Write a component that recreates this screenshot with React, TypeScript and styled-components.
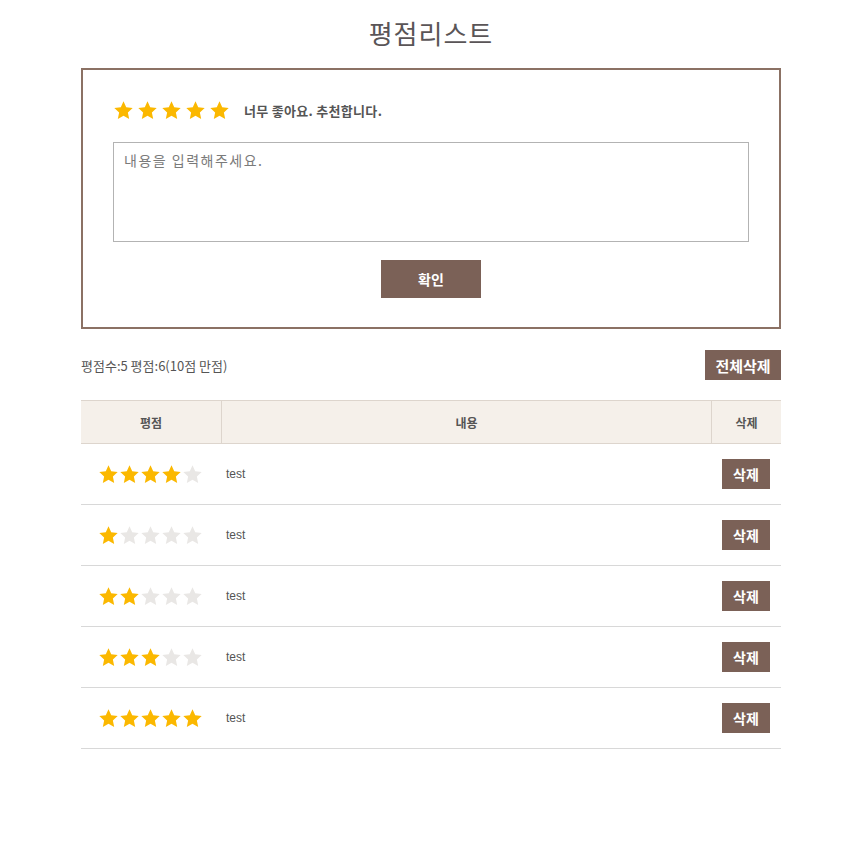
import React from "react";
import styled, { createGlobalStyle } from "styled-components";

const Global = createGlobalStyle`
  html, body { margin: 0; padding: 0; background: #fff; }
  body { font-family: "Liberation Sans", "Noto Sans CJK KR", sans-serif; color: #555; }
  * { box-sizing: border-box; }
`;

const Page = styled.div`
  width: 700px;
  margin: 0 auto;
  padding-top: 15px;
`;

const Title = styled.h1`
  margin: 0 0 17px;
  height: 36px;
  line-height: 36px;
  text-align: center;
  font-family: "Noto Sans CJK KR", sans-serif;
  font-weight: 400;
  font-size: 26px;
  letter-spacing: 1px;
  color: #5a5557;
`;

const FormBox = styled.div`
  border: 2px solid #8b7164;
  padding: 30px 30px 29px;
  display: flex;
  flex-direction: column;
`;

const RatingRow = styled.div`
  display: flex;
  align-items: center;
  height: 20px;
`;

const Stars = styled.div<{ $gap: number }>`
  display: flex;
  gap: ${(p) => p.$gap}px;
`;

const RatingLabel = styled.span`
  margin-left: 14px;
  font-size: 13px;
  font-weight: 700;
  letter-spacing: 0.3px;
  color: #555;
  font-family: "Noto Sans CJK KR", sans-serif;
`;

const TextArea = styled.textarea`
  display: block;
  margin-top: 22px;
  width: 100%;
  height: 100px;
  border: 1px solid #b3b3b3;
  padding: 7px 10px;
  resize: none;
  font-family: "Noto Sans CJK KR", sans-serif;
  font-size: 14px;
  letter-spacing: 1.5px;
  color: #555;
  outline: none;
  &::placeholder { color: #7a7a7a; }
`;

const ConfirmButton = styled.button`
  align-self: center;
  margin-top: 18px;
  width: 100px;
  height: 38px;
  border: none;
  background: #7b6157;
  color: #fff;
  font-family: "Noto Sans CJK KR", sans-serif;
  font-weight: 700;
  font-size: 14px;
`;

const SummaryBar = styled.div`
  margin-top: 21px;
  height: 30px;
  display: flex;
  align-items: center;
  justify-content: space-between;
`;

const SummaryText = styled.span`
  font-size: 13px;
  color: #555;
  font-family: "Noto Sans CJK KR", sans-serif;
`;

const BrownButton = styled.button<{ $w: number; $h: number; $fs: number }>`
  width: ${(p) => p.$w}px;
  height: ${(p) => p.$h}px;
  border: none;
  padding: 0;
  background: #7b6157;
  color: #fff;
  font-family: "Noto Sans CJK KR", sans-serif;
  font-weight: 700;
  font-size: ${(p) => p.$fs}px;
`;

const Table = styled.div`
  margin-top: 20px;
  display: grid;
  grid-template-columns: 140px 1fr 70px;
`;

const HeadCell = styled.div<{ $divider?: boolean }>`
  height: 44px;
  background: #f5f0ea;
  border-top: 1px solid #ddd5cd;
  border-bottom: 1px solid #ddd5cd;
  border-left: ${(p) => (p.$divider ? "1px solid #ddd5cd" : "none")};
  display: flex;
  align-items: center;
  justify-content: center;
  font-size: 12px;
  font-weight: 700;
  color: #555;
  font-family: "Noto Sans CJK KR", sans-serif;
`;

const Cell = styled.div<{ $align: "center" | "flex-start" }>`
  height: 61px;
  border-bottom: 1px solid #d8d8d8;
  display: flex;
  align-items: center;
  justify-content: ${(p) => p.$align};
  padding-left: ${(p) => (p.$align === "flex-start" ? "5px" : "0")};
  font-size: 12px;
  color: #555;
`;

const StarCell = styled(Cell)`
  padding-right: 2px;
`;

const Star = ({ on, size }: { on: boolean; size: number }) => (
  <svg width={size} height={size} viewBox="0 0 24 24">
    <polygon
      points="12,1.5 15.1,8.2 22.5,9.1 17,14.2 18.5,21.6 12,17.9 5.5,21.6 7,14.2 1.5,9.1 8.9,8.2"
      fill={on ? "#fbb800" : "#e9e7e5"}
    />
  </svg>
);

const StarGroup = ({ n, size, gap }: { n: number; size: number; gap: number }) => (
  <Stars $gap={gap}>
    {[0, 1, 2, 3, 4].map((i) => (
      <Star key={i} on={i < n} size={size} />
    ))}
  </Stars>
);

const rows = [4, 1, 2, 3, 5];

export default function App() {
  return (
    <>
      <Global />
      <Page>
        <Title>평점리스트</Title>
        <FormBox>
          <RatingRow>
            <StarGroup n={5} size={21} gap={3} />
            <RatingLabel>너무 좋아요. 추천합니다.</RatingLabel>
          </RatingRow>
          <TextArea placeholder="내용을 입력해주세요." />
          <ConfirmButton>확인</ConfirmButton>
        </FormBox>
        <SummaryBar>
          <SummaryText>평점수:5 평점:6(10점 만점)</SummaryText>
          <BrownButton $w={76} $h={30} $fs={15}>전체삭제</BrownButton>
        </SummaryBar>
        <Table>
          <HeadCell>평점</HeadCell>
          <HeadCell $divider>내용</HeadCell>
          <HeadCell $divider>삭제</HeadCell>
          {rows.map((n, i) => (
            <React.Fragment key={i}>
              <StarCell $align="center">
                <StarGroup n={n} size={21} gap={0} />
              </StarCell>
              <Cell $align="flex-start">test</Cell>
              <Cell $align="center">
                <BrownButton $w={48} $h={30} $fs={14}>삭제</BrownButton>
              </Cell>
            </React.Fragment>
          ))}
        </Table>
      </Page>
    </>
  );
}
